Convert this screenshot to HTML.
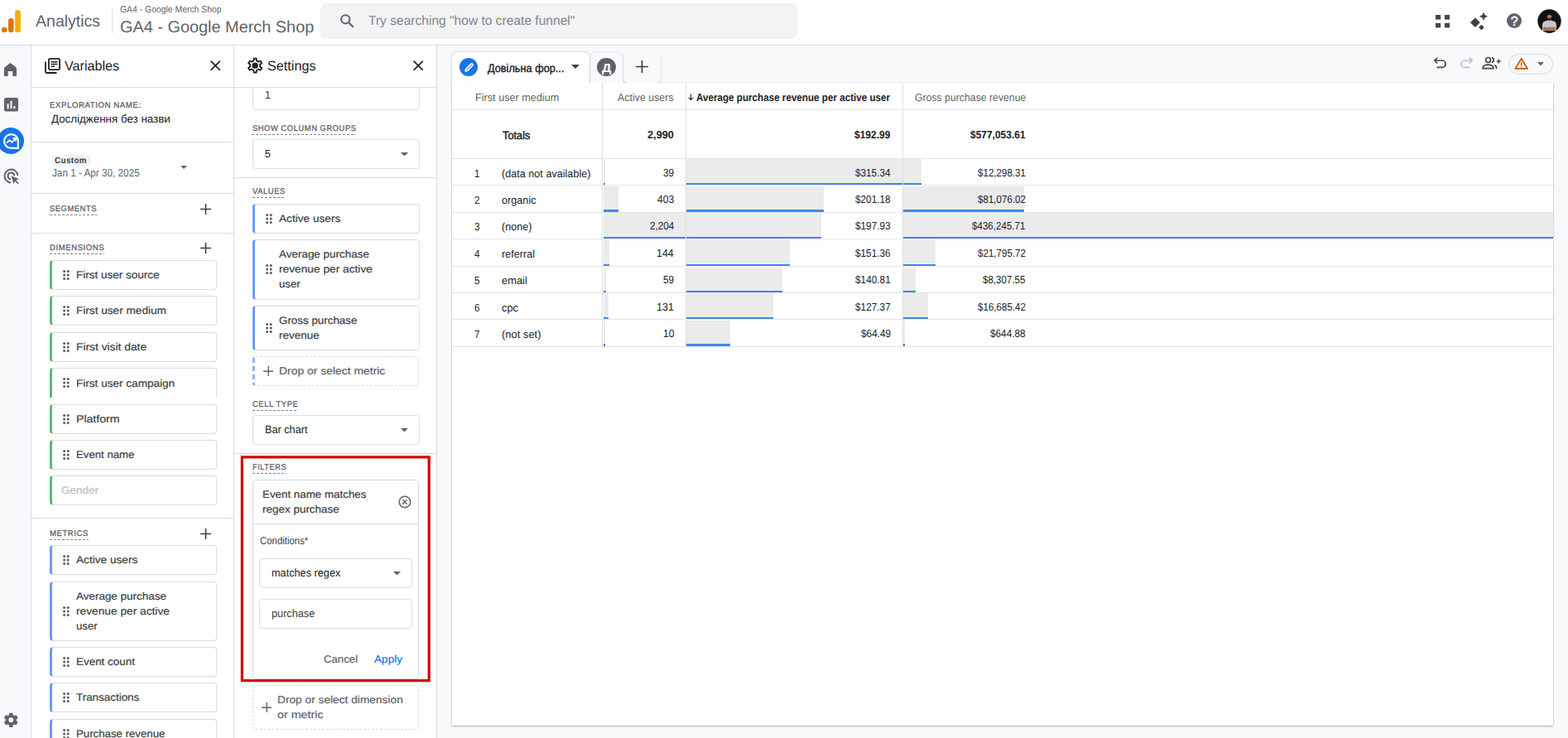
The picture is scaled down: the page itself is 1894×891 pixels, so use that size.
<!DOCTYPE html><html lang="en"><head><meta charset="utf-8"><title>Analytics</title><style>
*{box-sizing:border-box;margin:0;padding:0}
html,body{width:1894px;height:891px;overflow:hidden;background:#fff}
body{font-family:"Liberation Sans",sans-serif;color:#202124;position:relative;font-size:13px;text-rendering:geometricPrecision}
.a{position:absolute}
.t{position:absolute;white-space:nowrap;line-height:1}
.hl{position:absolute;height:1px;background:#dadce0}
.vl{position:absolute;width:1px;background:#dadce0}
.ul{position:absolute;height:1px;background:repeating-linear-gradient(90deg,#80868b 0,#80868b 3px,transparent 3px,transparent 5px)}
.chip{position:absolute;border:1px solid #dadce0;border-left-width:3px;border-radius:4px;background:#fff}
.dim{border-left-color:#5bb974}
.met{border-left-color:#669df6}
.box{position:absolute;border:1px solid #dadce0;border-radius:4px;background:#fff}
.bar{position:absolute;background:#ebebeb}
.bl{position:absolute;background:#4285f4}
.rb{position:absolute;height:1px;background:#e3e3e3;left:546px;width:1330px}
</style></head><body>
<div class="a" style="left:0px;top:55px;width:37px;height:836px;background:#f8f9fa;"></div>
<div class="a" style="left:528px;top:55px;width:1366px;height:836px;background:#f8f9fa;"></div>
<div class="hl" style="left:0px;top:54px;width:1894px"></div>
<div class="vl" style="left:37px;top:55px;height:836px"></div>
<div class="vl" style="left:282px;top:55px;height:836px"></div>
<div class="vl" style="left:527px;top:55px;height:836px"></div>
<svg class="a" style="left:2px;top:12px" width="24" height="28" viewBox="0 0 24 28"><rect x="16.2" y="0" width="6.7" height="27.3" rx="3.3" fill="#f9ab00"/><rect x="8" y="10" width="6.6" height="17.3" rx="3.3" fill="#e37400"/><circle cx="3.3" cy="24" r="3.3" fill="#e37400"/></svg>
<div class="t" style="left:43.3px;top:17px;font-size:19.7px;color:#5f6368;transform:scaleX(0.9916);transform-origin:0 0;">Analytics</div>
<div class="vl" style="left:135px;top:11px;height:29px"></div>
<div class="t" style="left:145px;top:7px;font-size:11.3px;color:#5f6368;transform:scaleX(0.9209);transform-origin:0 0;">GA4 - Google Merch Shop</div>
<div class="t" style="left:145.4px;top:24px;font-size:19.7px;color:#5f6368;transform:scaleX(1.0098);transform-origin:0 0;">GA4 - Google Merch Shop</div>
<div class="a" style="left:387px;top:4px;width:576px;height:43px;background:#f1f3f4;border-radius:8px"></div>
<svg class="a" style="left:410px;top:16px" width="19" height="19" viewBox="0 0 19 19"><circle cx="7.3" cy="7.3" r="5.1" stroke="#5f6368" stroke-width="2" fill="none"/><path d="M11.2 11.200L16.800 16.800" stroke="#5f6368" stroke-width="2.2" fill="none"/></svg>
<div class="t" style="left:445.3px;top:18px;font-size:15.8px;color:#80868b;transform:scaleX(0.9855);transform-origin:0 0;">Try searching &quot;how to create funnel&quot;</div>
<svg class="a" style="left:1734px;top:18px" width="17" height="16" viewBox="0 0 17 16"><g fill="#444746"><rect x="0" y="0" width="6.2" height="5.6"/><rect x="11" y="0" width="6" height="5.600"/><rect x="0" y="9.800" width="6.200" height="5.600"/><rect x="11" y="9.800" width="6" height="5.600"/></g></svg>
<svg class="a" style="left:1775px;top:15px" width="22" height="22" viewBox="0 0 22 22"><g fill="#3c4043"><path d="M6.900 6.300L12.800 12.200L6.900 18.100L1 12.200Z"/><path d="M17 0.700Q17.500 4.300 21.100 4.800Q17.500 5.300 17 8.900Q16.500 5.300 12.900 4.800Q16.500 4.300 17 0.700Z" stroke="#3c4043" stroke-width="1.100" stroke-linejoin="round"/><path d="M14.400 14.800L17.700 18.100L14.400 21.400L11.100 18.100Z"/></g></svg>
<div class="a" style="left:1820px;top:16px;width:18px;height:18px;border-radius:50%;background:#5f6368"></div>
<div class="t" style="left:1824.76px;top:19px;font-size:16px;color:#fff;-webkit-text-stroke:0.5px #fff;">?</div>
<svg class="a" style="left:1857px;top:11px" width="29" height="29" viewBox="0 0 29 29"><defs><clipPath id="av"><circle cx="14.5" cy="14.5" r="14.2"/></clipPath></defs><g clip-path="url(#av)"><rect width="29" height="29" fill="#121212"/><path d="M6 27.5V19.500Q6 14.800 10.500 14.200L12.800 13.600H16.200L18.500 14.200Q23 14.800 23 19.500V27.500Z" fill="#c6c7ca"/><ellipse cx="14.500" cy="9.300" rx="2.700" ry="3.500" fill="#a67a5f"/><path d="M11.700 8.300Q11.600 4.900 14.500 4.900T17.300 8.300Q16.500 6.900 14.500 6.900T11.700 8.300Z" fill="#1d1511"/><path d="M11.900 10.200Q14.500 11.800 17.100 10.200Q17 13.300 14.500 13.400T11.900 10.200Z" fill="#33241c"/><rect x="6.500" y="21.700" width="16" height="4.300" rx="2" fill="#a5775b"/><rect x="0" y="26.200" width="29" height="3" fill="#121212"/></g></svg>
<svg class="a" style="left:4.8px;top:75.5px" width="15" height="16.5" viewBox="0 0 15 16.5"><path d="M0 6.800Q0 5.800 0.800 5.200L6.500 0.600Q7.500 -0.100 8.500 0.600L14.200 5.200Q15 5.800 15 6.800V16.500H10.300V10H4.700V16.500H0Z" fill="#5f6368"/></svg>
<svg class="a" style="left:5px;top:118px" width="17" height="16.5" viewBox="0 0 17 16.5"><rect width="17" height="16.500" rx="2" fill="#5f6368"/><rect x="3.600" y="7.200" width="2" height="6" fill="#f8f9fa"/><rect x="7.500" y="3.800" width="2" height="9.400" fill="#f8f9fa"/><rect x="11.400" y="10" width="2" height="3.200" fill="#f8f9fa"/></svg>
<div class="a" style="left:-3px;top:154px;width:32px;height:32px;border-radius:50%;background:#1a73e8"></div>
<svg class="a" style="left:3.2px;top:159.5px" width="21" height="21" viewBox="0 0 20 20"><path d="M10 2a8 8 0 1 0 0 16h8V10A8 8 0 0 0 10 2Z" fill="none" stroke="#fff" stroke-width="2.100"/><path d="M4.800 11.800L8 8.800L10.800 11.200L14.500 7.500" stroke="#fff" stroke-width="1.900" fill="none"/><path d="M11.800 6.500h3.500V10" stroke="#fff" stroke-width="1.700" fill="none"/></svg>
<svg class="a" style="left:4px;top:203px" width="20" height="20" viewBox="0 0 20 20"><path d="M9 17.500A8 8 0 1 1 17.500 9" stroke="#5f6368" stroke-width="2" fill="none"/><path d="M9 13.500A4 4 0 1 1 13.500 9" stroke="#5f6368" stroke-width="2" fill="none"/><path d="M9.500 9.500L19 13L15.300 14.600L18.800 18.200L17.600 19.400L14.200 15.800L12.600 19Z" fill="#5f6368"/></svg>
<svg class="a" style="left:3.2px;top:858.7px" width="20.6" height="20.6" viewBox="0 0 24 24"><path fill="#5f6368" fill-rule="evenodd" d="M19.430 12.980c.040-.320.070-.640.070-.980s-.030-.660-.070-.980l2.110-1.650c.190-.150.240-.420.120-.640l-2-3.460c-.120-.220-.390-.300-.610-.220l-2.490 1c-.520-.400-1.080-.730-1.690-.980l-.380-2.650C14.460 2.180 14.250 2 14 2h-4c-.250 0-.460.180-.490.420l-.380 2.650c-.610.250-1.170.590-1.690.980l-2.490-1c-.230-.090-.490 0-.610.220l-2 3.460c-.130.220-.070.490.120.640l2.110 1.650c-.040.320-.070.650-.070.980s.030.660.070.980l-2.110 1.650c-.190.150-.240.420-.120.640l2 3.460c.120.220.390.300.610.220l2.490-1c.520.400 1.080.730 1.690.980l.380 2.650c.030.240.240.420.490.420h4c.250 0 .460-.180.490-.420l.380-2.650c.610-.250 1.170-.590 1.690-.980l2.490 1c.230.090.490 0 .610-.220l2-3.460c.120-.220.070-.490-.120-.640l-2.110-1.650zM12 15.500a3.500 3.500 0 1 1 0-7a3.500 3.500 0 0 1 0 7z"/></svg>
<svg class="a" style="left:54px;top:70px" width="19" height="19" viewBox="0 0 19 19"><path d="M1 4.500V16.500a1.500 1.500 0 0 0 1.500 1.500H14.500" stroke="#202124" stroke-width="1.800" fill="none"/><rect x="4.900" y="0.900" width="13.200" height="13.200" rx="1.500" stroke="#202124" stroke-width="1.800" fill="none"/><path d="M7.500 4.700H15.500M7.500 7.500H15.500M7.500 10.300H12" stroke="#202124" stroke-width="1.500" fill="none"/></svg>
<div class="t" style="left:78px;top:72px;font-size:16.5px;color:#202124;transform:scaleX(0.9778);transform-origin:0 0;">Variables</div>
<svg class="a" style="left:254.35px;top:72.95px" width="12.5" height="12.5" viewBox="0 0 12.5 12.5"><path d="M0.6 0.6L11.9 11.9M11.9 0.6L0.6 11.9" stroke="#202124" stroke-width="1.7" fill="none"/></svg>
<div class="hl" style="left:38px;top:105px;width:244px"></div>
<div class="t" style="left:60.3px;top:123px;font-size:9.7px;color:#5f6368;letter-spacing:0.6px;transform:scaleX(0.9891);transform-origin:0 0;-webkit-text-stroke:0.3px #5f6368;">EXPLORATION NAME:</div>
<div class="t" style="left:62.2px;top:137px;font-size:13.5px;color:#202124;transform:scaleX(0.9893);transform-origin:0 0;">Дослідження без назви</div>
<div class="hl" style="left:38px;top:171px;width:244px"></div>
<div class="a" style="left:63px;top:187px;width:46px;height:14px;background:#f1f3f4;"></div>
<div class="t" style="left:66.3px;top:189px;font-size:10.5px;color:#3c4043;font-weight:bold;letter-spacing:0.5px;transform:scaleX(0.9260);transform-origin:0 0;">Custom</div>
<div class="t" style="left:63.3px;top:202px;font-size:13px;color:#5f6368;transform:scaleX(0.9027);transform-origin:0 0;">Jan 1 - Apr 30, 2025</div>
<svg class="a" style="left:218px;top:200px" width="8" height="4" viewBox="0 0 8 4"><path d="M0 0H8L4.0 4Z" fill="#5f6368"/></svg>
<div class="hl" style="left:38px;top:233px;width:244px"></div>
<div class="t" style="left:60.2px;top:248px;font-size:9.7px;color:#5f6368;letter-spacing:0.6px;transform:scaleX(0.9638);transform-origin:0 0;-webkit-text-stroke:0.3px #5f6368;">SEGMENTS</div>
<div class="ul" style="left:59.7px;top:259px;width:57.1px"></div>
<svg class="a" style="left:241.5px;top:245.7px" width="13" height="13" viewBox="0 0 13 13"><path d="M6.5 0V13M0 6.5H13" stroke="#3c4043" stroke-width="1.6" fill="none"/></svg>
<div class="hl" style="left:38px;top:281px;width:244px"></div>
<div class="t" style="left:60.2px;top:295px;font-size:9.7px;color:#5f6368;letter-spacing:0.6px;transform:scaleX(0.9832);transform-origin:0 0;-webkit-text-stroke:0.3px #5f6368;">DIMENSIONS</div>
<div class="ul" style="left:59.7px;top:306px;width:66.3px"></div>
<svg class="a" style="left:241.5px;top:293.2px" width="13" height="13" viewBox="0 0 13 13"><path d="M6.5 0V13M0 6.5H13" stroke="#3c4043" stroke-width="1.6" fill="none"/></svg>
<div class="chip dim" style="left:60px;top:314px;width:202px;height:36px"></div>
<svg class="a" style="left:75.6px;top:325.8px" width="8" height="13" viewBox="0 0 8 13"><g fill="#5f6368"><circle cx="1.6" cy="1.6" r="1.55"/><circle cx="1.6" cy="6.1" r="1.55"/><circle cx="1.6" cy="10.6" r="1.55"/><circle cx="6.199999999999999" cy="1.6" r="1.55"/><circle cx="6.199999999999999" cy="6.1" r="1.55"/><circle cx="6.199999999999999" cy="10.6" r="1.55"/></g></svg>
<div class="t" style="left:92.2px;top:326px;font-size:12.5px;color:#3c4043;transform:scaleX(1.0807);transform-origin:0 0;-webkit-text-stroke:0.2px #3c4043;">First user source</div>
<div class="chip dim" style="left:60px;top:357px;width:202px;height:36px"></div>
<svg class="a" style="left:75.6px;top:368.8px" width="8" height="13" viewBox="0 0 8 13"><g fill="#5f6368"><circle cx="1.6" cy="1.6" r="1.55"/><circle cx="1.6" cy="6.1" r="1.55"/><circle cx="1.6" cy="10.6" r="1.55"/><circle cx="6.199999999999999" cy="1.6" r="1.55"/><circle cx="6.199999999999999" cy="6.1" r="1.55"/><circle cx="6.199999999999999" cy="10.6" r="1.55"/></g></svg>
<div class="t" style="left:92.2px;top:369px;font-size:12.5px;color:#3c4043;transform:scaleX(1.0888);transform-origin:0 0;-webkit-text-stroke:0.2px #3c4043;">First user medium</div>
<div class="chip dim" style="left:60px;top:401px;width:202px;height:36px"></div>
<svg class="a" style="left:75.6px;top:412.8px" width="8" height="13" viewBox="0 0 8 13"><g fill="#5f6368"><circle cx="1.6" cy="1.6" r="1.55"/><circle cx="1.6" cy="6.1" r="1.55"/><circle cx="1.6" cy="10.6" r="1.55"/><circle cx="6.199999999999999" cy="1.6" r="1.55"/><circle cx="6.199999999999999" cy="6.1" r="1.55"/><circle cx="6.199999999999999" cy="10.6" r="1.55"/></g></svg>
<div class="t" style="left:92.2px;top:413px;font-size:12.5px;color:#3c4043;transform:scaleX(1.1037);transform-origin:0 0;-webkit-text-stroke:0.2px #3c4043;">First visit date</div>
<div class="chip dim" style="left:60px;top:444px;width:202px;height:36px;border-bottom:none;border-radius:4px 4px 0 0"></div>
<svg class="a" style="left:75.6px;top:455.8px" width="8" height="13" viewBox="0 0 8 13"><g fill="#5f6368"><circle cx="1.6" cy="1.6" r="1.55"/><circle cx="1.6" cy="6.1" r="1.55"/><circle cx="1.6" cy="10.6" r="1.55"/><circle cx="6.199999999999999" cy="1.6" r="1.55"/><circle cx="6.199999999999999" cy="6.1" r="1.55"/><circle cx="6.199999999999999" cy="10.6" r="1.55"/></g></svg>
<div class="t" style="left:92.2px;top:457px;font-size:12.5px;color:#3c4043;transform:scaleX(1.0856);transform-origin:0 0;-webkit-text-stroke:0.2px #3c4043;">First user campaign</div>
<div class="chip dim" style="left:60px;top:488px;width:202px;height:36px"></div>
<svg class="a" style="left:75.6px;top:499.8px" width="8" height="13" viewBox="0 0 8 13"><g fill="#5f6368"><circle cx="1.6" cy="1.6" r="1.55"/><circle cx="1.6" cy="6.1" r="1.55"/><circle cx="1.6" cy="10.6" r="1.55"/><circle cx="6.199999999999999" cy="1.6" r="1.55"/><circle cx="6.199999999999999" cy="6.1" r="1.55"/><circle cx="6.199999999999999" cy="10.6" r="1.55"/></g></svg>
<div class="t" style="left:92.2px;top:500px;font-size:12.5px;color:#3c4043;transform:scaleX(1.1265);transform-origin:0 0;-webkit-text-stroke:0.2px #3c4043;">Platform</div>
<div class="chip dim" style="left:60px;top:531px;width:202px;height:36px"></div>
<svg class="a" style="left:75.6px;top:542.8px" width="8" height="13" viewBox="0 0 8 13"><g fill="#5f6368"><circle cx="1.6" cy="1.6" r="1.55"/><circle cx="1.6" cy="6.1" r="1.55"/><circle cx="1.6" cy="10.6" r="1.55"/><circle cx="6.199999999999999" cy="1.6" r="1.55"/><circle cx="6.199999999999999" cy="6.1" r="1.55"/><circle cx="6.199999999999999" cy="10.6" r="1.55"/></g></svg>
<div class="t" style="left:92.2px;top:543px;font-size:12.5px;color:#3c4043;transform:scaleX(1.0551);transform-origin:0 0;-webkit-text-stroke:0.2px #3c4043;">Event name</div>
<div class="chip dim" style="left:60px;top:574px;width:202px;height:36px"></div>
<div class="t" style="left:74.2px;top:586px;font-size:12.5px;color:#bdc1c6;transform:scaleX(1.0795);transform-origin:0 0;-webkit-text-stroke:0.2px #bdc1c6;">Gender</div>
<div class="hl" style="left:38px;top:625px;width:244px"></div>
<div class="t" style="left:60.2px;top:640px;font-size:9.7px;color:#5f6368;letter-spacing:0.6px;transform:scaleX(0.9826);transform-origin:0 0;-webkit-text-stroke:0.3px #5f6368;">METRICS</div>
<div class="ul" style="left:59.7px;top:651px;width:47px"></div>
<svg class="a" style="left:241.5px;top:637.5px" width="13" height="13" viewBox="0 0 13 13"><path d="M6.5 0V13M0 6.5H13" stroke="#3c4043" stroke-width="1.6" fill="none"/></svg>
<div class="chip met" style="left:60px;top:658px;width:202px;height:36px"></div>
<svg class="a" style="left:75.6px;top:669.8px" width="8" height="13" viewBox="0 0 8 13"><g fill="#5f6368"><circle cx="1.6" cy="1.6" r="1.55"/><circle cx="1.6" cy="6.1" r="1.55"/><circle cx="1.6" cy="10.6" r="1.55"/><circle cx="6.199999999999999" cy="1.6" r="1.55"/><circle cx="6.199999999999999" cy="6.1" r="1.55"/><circle cx="6.199999999999999" cy="10.6" r="1.55"/></g></svg>
<div class="t" style="left:92.2px;top:670px;font-size:12.5px;color:#3c4043;transform:scaleX(1.0908);transform-origin:0 0;-webkit-text-stroke:0.2px #3c4043;">Active users</div>
<div class="chip met" style="left:60px;top:702px;width:202px;height:72px"></div>
<svg class="a" style="left:75.6px;top:731.8px" width="8" height="13" viewBox="0 0 8 13"><g fill="#5f6368"><circle cx="1.6" cy="1.6" r="1.55"/><circle cx="1.6" cy="6.1" r="1.55"/><circle cx="1.6" cy="10.6" r="1.55"/><circle cx="6.199999999999999" cy="1.6" r="1.55"/><circle cx="6.199999999999999" cy="6.1" r="1.55"/><circle cx="6.199999999999999" cy="10.6" r="1.55"/></g></svg>
<div class="t" style="left:92.2px;top:714px;font-size:12.5px;color:#3c4043;transform:scaleX(1.0756);transform-origin:0 0;-webkit-text-stroke:0.2px #3c4043;">Average purchase</div>
<div class="t" style="left:92.2px;top:732px;font-size:12.5px;color:#3c4043;transform:scaleX(1.0980);transform-origin:0 0;-webkit-text-stroke:0.2px #3c4043;">revenue per active</div>
<div class="t" style="left:92.2px;top:750px;font-size:12.5px;color:#3c4043;transform:scaleX(1.0570);transform-origin:0 0;-webkit-text-stroke:0.2px #3c4043;">user</div>
<div class="chip met" style="left:60px;top:781px;width:202px;height:36px"></div>
<svg class="a" style="left:75.6px;top:792.8px" width="8" height="13" viewBox="0 0 8 13"><g fill="#5f6368"><circle cx="1.6" cy="1.6" r="1.55"/><circle cx="1.6" cy="6.1" r="1.55"/><circle cx="1.6" cy="10.6" r="1.55"/><circle cx="6.199999999999999" cy="1.6" r="1.55"/><circle cx="6.199999999999999" cy="6.1" r="1.55"/><circle cx="6.199999999999999" cy="10.6" r="1.55"/></g></svg>
<div class="t" style="left:92.2px;top:793px;font-size:12.5px;color:#3c4043;transform:scaleX(1.0743);transform-origin:0 0;-webkit-text-stroke:0.2px #3c4043;">Event count</div>
<div class="chip met" style="left:60px;top:824px;width:202px;height:36px"></div>
<svg class="a" style="left:75.6px;top:835.8px" width="8" height="13" viewBox="0 0 8 13"><g fill="#5f6368"><circle cx="1.6" cy="1.6" r="1.55"/><circle cx="1.6" cy="6.1" r="1.55"/><circle cx="1.6" cy="10.6" r="1.55"/><circle cx="6.199999999999999" cy="1.6" r="1.55"/><circle cx="6.199999999999999" cy="6.1" r="1.55"/><circle cx="6.199999999999999" cy="10.6" r="1.55"/></g></svg>
<div class="t" style="left:92.2px;top:836px;font-size:12.5px;color:#3c4043;transform:scaleX(1.0728);transform-origin:0 0;-webkit-text-stroke:0.2px #3c4043;">Transactions</div>
<div class="chip met" style="left:60px;top:868px;width:202px;height:36px"></div>
<svg class="a" style="left:75.6px;top:879.8px" width="8" height="13" viewBox="0 0 8 13"><g fill="#5f6368"><circle cx="1.6" cy="1.6" r="1.55"/><circle cx="1.6" cy="6.1" r="1.55"/><circle cx="1.6" cy="10.6" r="1.55"/><circle cx="6.199999999999999" cy="1.6" r="1.55"/><circle cx="6.199999999999999" cy="6.1" r="1.55"/><circle cx="6.199999999999999" cy="10.6" r="1.55"/></g></svg>
<div class="t" style="left:92.2px;top:880px;font-size:12.5px;color:#3c4043;transform:scaleX(1.0584);transform-origin:0 0;-webkit-text-stroke:0.2px #3c4043;">Purchase revenue</div>
<svg class="a" style="left:297.1px;top:67.9px" width="22.3" height="22.3" viewBox="0 0 24 24"><path fill="#202124" fill-rule="evenodd" d="M19.430 12.980c.040-.320.070-.640.070-.980s-.030-.660-.070-.980l2.110-1.650c.190-.150.240-.420.120-.640l-2-3.460c-.120-.220-.390-.300-.610-.220l-2.490 1c-.520-.400-1.080-.730-1.690-.980l-.380-2.650C14.460 2.180 14.250 2 14 2h-4c-.250 0-.460.180-.490.420l-.380 2.650c-.610.250-1.170.590-1.690.980l-2.490-1c-.230-.090-.490 0-.610.220l-2 3.460c-.130.220-.070.490.120.640l2.110 1.650c-.040.320-.070.650-.070.980s.030.660.070.980l-2.110 1.650c-.190.150-.240.420-.120.640l2 3.460c.120.220.390.300.610.220l2.490-1c.520.400 1.080.730 1.690.980l.380 2.650c.030.240.240.420.490.420h4c.250 0 .460-.180.490-.420l.380-2.650c.610-.250 1.170-.590 1.690-.980l2.490 1c.230.090.490 0 .610-.220l2-3.460c.120-.220.070-.490-.120-.640l-2.110-1.650zM17.450 11.270c.040.310.050.520.050.730s-.020.430-.050.730l-.140 1.130.890.700 1.080.840-.7 1.210-1.270-.510-1.040-.420-.9.680c-.430.320-.840.560-1.250.730l-1.060.430-.160 1.130-.2 1.350h-1.400l-.190-1.350-.160-1.130-1.060-.430c-.430-.180-.830-.410-1.230-.710l-.910-.7-1.060.430-1.270.510-.7-1.210 1.080-.840.890-.7-.14-1.130c-.030-.310-.050-.540-.050-.740s.020-.430.050-.730l.140-1.130-.890-.7-1.080-.840.7-1.210 1.270.51 1.040.42.900-.68c.430-.32.840-.56 1.250-.730l1.060-.43.160-1.130.2-1.350h1.390l.19 1.350.16 1.130 1.060.43c.430.180.830.410 1.230.71l.91.7 1.060-.43 1.270-.51.700 1.210-1.070.85-.89.700.14 1.130zM12 8a4 4 0 1 0 0 8a4 4 0 0 0 0-8z"/></svg>
<div class="t" style="left:323px;top:72px;font-size:16.5px;color:#202124;transform:scaleX(0.9826);transform-origin:0 0;">Settings</div>
<svg class="a" style="left:498.95px;top:72.95px" width="12.5" height="12.5" viewBox="0 0 12.5 12.5"><path d="M0.6 0.6L11.9 11.9M11.9 0.6L0.6 11.9" stroke="#202124" stroke-width="1.7" fill="none"/></svg>
<div class="box" style="left:305px;top:96px;width:202px;height:37px"></div>
<div class="a" style="left:283px;top:90px;width:244px;height:15px;background:#fff;"></div>
<div class="hl" style="left:283px;top:105px;width:244px"></div>
<div class="t" style="left:319.67px;top:108px;font-size:13px;color:#3c4043;">1</div>
<div class="t" style="left:304.8px;top:151px;font-size:9.7px;color:#5f6368;letter-spacing:0.6px;transform:scaleX(0.9636);transform-origin:0 0;-webkit-text-stroke:0.3px #5f6368;">SHOW COLUMN GROUPS</div>
<div class="ul" style="left:304.3px;top:162px;width:125.7px"></div>
<div class="box" style="left:305px;top:168px;width:202px;height:36px"></div>
<div class="t" style="left:319.71px;top:179px;font-size:13px;color:#202124;">5</div>
<svg class="a" style="left:483.5px;top:183.95px" width="9" height="4.5" viewBox="0 0 9 4.5"><path d="M0 0H9L4.5 4.5Z" fill="#5f6368"/></svg>
<div class="hl" style="left:283px;top:214px;width:244px"></div>
<div class="t" style="left:305px;top:227px;font-size:9.7px;color:#5f6368;letter-spacing:0.6px;transform:scaleX(0.9719);transform-origin:0 0;-webkit-text-stroke:0.3px #5f6368;">VALUES</div>
<div class="ul" style="left:304.5px;top:238px;width:40px"></div>
<div class="chip met" style="left:305px;top:246px;width:202px;height:36px"></div>
<svg class="a" style="left:320.6px;top:257.8px" width="8" height="13" viewBox="0 0 8 13"><g fill="#5f6368"><circle cx="1.6" cy="1.6" r="1.55"/><circle cx="1.6" cy="6.1" r="1.55"/><circle cx="1.6" cy="10.6" r="1.55"/><circle cx="6.199999999999999" cy="1.6" r="1.55"/><circle cx="6.199999999999999" cy="6.1" r="1.55"/><circle cx="6.199999999999999" cy="10.6" r="1.55"/></g></svg>
<div class="t" style="left:336.7px;top:258px;font-size:12.5px;color:#3c4043;transform:scaleX(1.0908);transform-origin:0 0;-webkit-text-stroke:0.2px #3c4043;">Active users</div>
<div class="chip met" style="left:305px;top:289px;width:202px;height:73px"></div>
<svg class="a" style="left:320.6px;top:319.3px" width="8" height="13" viewBox="0 0 8 13"><g fill="#5f6368"><circle cx="1.6" cy="1.6" r="1.55"/><circle cx="1.6" cy="6.1" r="1.55"/><circle cx="1.6" cy="10.6" r="1.55"/><circle cx="6.199999999999999" cy="1.6" r="1.55"/><circle cx="6.199999999999999" cy="6.1" r="1.55"/><circle cx="6.199999999999999" cy="10.6" r="1.55"/></g></svg>
<div class="t" style="left:336.7px;top:301px;font-size:12.5px;color:#3c4043;transform:scaleX(1.0756);transform-origin:0 0;-webkit-text-stroke:0.2px #3c4043;">Average purchase</div>
<div class="t" style="left:336.7px;top:319px;font-size:12.5px;color:#3c4043;transform:scaleX(1.0980);transform-origin:0 0;-webkit-text-stroke:0.2px #3c4043;">revenue per active</div>
<div class="t" style="left:336.7px;top:337px;font-size:12.5px;color:#3c4043;transform:scaleX(1.0570);transform-origin:0 0;-webkit-text-stroke:0.2px #3c4043;">user</div>
<div class="chip met" style="left:305px;top:369px;width:202px;height:54px"></div>
<svg class="a" style="left:320.6px;top:389.8px" width="8" height="13" viewBox="0 0 8 13"><g fill="#5f6368"><circle cx="1.6" cy="1.6" r="1.55"/><circle cx="1.6" cy="6.1" r="1.55"/><circle cx="1.6" cy="10.6" r="1.55"/><circle cx="6.199999999999999" cy="1.6" r="1.55"/><circle cx="6.199999999999999" cy="6.1" r="1.55"/><circle cx="6.199999999999999" cy="10.6" r="1.55"/></g></svg>
<div class="t" style="left:336.7px;top:381px;font-size:12.5px;color:#3c4043;transform:scaleX(1.0697);transform-origin:0 0;-webkit-text-stroke:0.2px #3c4043;">Gross purchase</div>
<div class="t" style="left:336.7px;top:399px;font-size:12.5px;color:#3c4043;transform:scaleX(1.0824);transform-origin:0 0;-webkit-text-stroke:0.2px #3c4043;">revenue</div>
<div class="a" style="left:305px;top:430px;width:201px;height:36px;border:1px dashed #dadce0;border-radius:4px"></div>
<div class="a" style="left:305px;top:432px;width:3px;height:33px;background:repeating-linear-gradient(180deg,#8ab4f8 0,#8ab4f8 6px,#fff 6px,#fff 10px)"></div>
<svg class="a" style="left:317.75px;top:441.75px" width="12.5" height="12.5" viewBox="0 0 12.5 12.5"><path d="M6.25 0V12.5M0 6.25H12.5" stroke="#5f6368" stroke-width="1.4" fill="none"/></svg>
<div class="t" style="left:337px;top:442px;font-size:12.6px;color:#5f6368;transform:scaleX(1.1045);transform-origin:0 0;-webkit-text-stroke:0.2px #5f6368;">Drop or select metric</div>
<div class="t" style="left:305px;top:484px;font-size:9.7px;color:#5f6368;letter-spacing:0.6px;transform:scaleX(0.9704);transform-origin:0 0;-webkit-text-stroke:0.3px #5f6368;">CELL TYPE</div>
<div class="ul" style="left:304.5px;top:495px;width:55.5px"></div>
<div class="box" style="left:305px;top:501px;width:202px;height:36px"></div>
<div class="t" style="left:319.8px;top:512px;font-size:13.3px;color:#202124;transform:scaleX(0.9542);transform-origin:0 0;">Bar chart</div>
<svg class="a" style="left:483.7px;top:517.15px" width="9" height="4.5" viewBox="0 0 9 4.5"><path d="M0 0H9L4.5 4.5Z" fill="#5f6368"/></svg>
<div class="hl" style="left:283px;top:547px;width:244px"></div>
<div class="t" style="left:305px;top:560px;font-size:9.7px;color:#5f6368;letter-spacing:0.6px;transform:scaleX(0.9497);transform-origin:0 0;-webkit-text-stroke:0.3px #5f6368;">FILTERS</div>
<div class="ul" style="left:304.5px;top:571px;width:41.2px"></div>
<div class="box" style="left:305px;top:579px;width:201px;height:241px"></div>
<div class="t" style="left:317px;top:591px;font-size:12.5px;color:#3c4043;transform:scaleX(1.0684);transform-origin:0 0;-webkit-text-stroke:0.2px #3c4043;">Event name matches</div>
<div class="t" style="left:317px;top:609px;font-size:12.5px;color:#3c4043;transform:scaleX(1.0768);transform-origin:0 0;-webkit-text-stroke:0.2px #3c4043;">regex purchase</div>
<svg class="a" style="left:481.3px;top:598.1px" width="16" height="16" viewBox="0 0 16 16"><circle cx="8" cy="8" r="6.800" stroke="#5f6368" stroke-width="1.500" fill="none"/><path d="M5.300 5.300L10.700 10.700M10.700 5.300L5.300 10.700" stroke="#5f6368" stroke-width="1.500"/></svg>
<div class="hl" style="left:306px;top:632px;width:199px"></div>
<div class="t" style="left:313.5px;top:647px;font-size:12.6px;color:#3c4043;transform:scaleX(0.9046);transform-origin:0 0;">Conditions*</div>
<div class="box" style="left:313px;top:674px;width:185px;height:36px"></div>
<div class="t" style="left:327.8px;top:685px;font-size:13.3px;color:#202124;transform:scaleX(0.9554);transform-origin:0 0;">matches regex</div>
<svg class="a" style="left:474.5px;top:689.85px" width="9" height="4.5" viewBox="0 0 9 4.5"><path d="M0 0H9L4.5 4.5Z" fill="#5f6368"/></svg>
<div class="box" style="left:313px;top:723px;width:185px;height:36px"></div>
<div class="t" style="left:327.8px;top:734px;font-size:13.3px;color:#3c4043;transform:scaleX(0.9551);transform-origin:0 0;">purchase</div>
<div class="t" style="left:391px;top:790px;font-size:12.6px;color:#5f6368;transform:scaleX(1.0478);transform-origin:0 0;-webkit-text-stroke:0.2px #5f6368;">Cancel</div>
<div class="t" style="left:452.3px;top:790px;font-size:12.6px;color:#1a73e8;transform:scaleX(1.0794);transform-origin:0 0;-webkit-text-stroke:0.2px #1a73e8;">Apply</div>
<svg class="a" style="left:288px;top:548px" width="235" height="278" viewBox="0 0 235 278"><rect x="4.350" y="3.900" width="225.900" height="269.800" fill="none" stroke="#d50000" stroke-width="3.200"/></svg>
<div class="a" style="left:305px;top:827px;width:201px;height:54px;border:1px dashed #dadce0;border-radius:4px"></div>
<svg class="a" style="left:315.85px;top:847.75px" width="12.5" height="12.5" viewBox="0 0 12.5 12.5"><path d="M6.25 0V12.5M0 6.25H12.5" stroke="#5f6368" stroke-width="1.4" fill="none"/></svg>
<div class="t" style="left:334.5px;top:839px;font-size:12.6px;color:#5f6368;transform:scaleX(1.0897);transform-origin:0 0;-webkit-text-stroke:0.2px #5f6368;">Drop or select dimension</div>
<div class="t" style="left:334.5px;top:857px;font-size:12.6px;color:#5f6368;transform:scaleX(1.1363);transform-origin:0 0;-webkit-text-stroke:0.2px #5f6368;">or metric</div>
<div class="a" style="left:546px;top:100px;width:1330px;height:776px;background:#fff;box-shadow:0 1px 2px rgba(60,64,67,.42),0 0 1.5px rgba(60,64,67,.16)"></div>
<div class="a" style="left:713px;top:63px;width:39px;height:37px;background:#f8f9fa;border-radius:7px 7px 0 0;box-shadow:0 0 2px rgba(60,64,67,.22)"></div>
<div class="a" style="left:753px;top:63px;width:45px;height:37px;background:#f8f9fa;border-radius:7px 7px 5px 5px;box-shadow:0 1px 2px rgba(60,64,67,.28)"></div>
<div class="a" style="left:546px;top:63px;width:166px;height:38px;background:#fff;border-radius:7px 7px 0 0;box-shadow:0 0 3px rgba(60,64,67,.3)"></div>
<div class="a" style="left:546px;top:100px;width:1330px;height:3px;background:#fff;"></div>
<div class="a" style="left:554.500px;top:69.700px;width:22.500px;height:22.500px;border-radius:50%;background:#1a73e8"></div>
<svg class="a" style="left:559.5px;top:74.7px" width="13" height="13" viewBox="0 0 13 13"><path d="M2 11L2.300 8.600L8.900 2a1.200 1.200 0 0 1 1.700 0l.4.400a1.200 1.200 0 0 1 0 1.700L4.400 10.700Z" fill="#8ab4f8" stroke="#fff" stroke-width="1.300" stroke-linejoin="round"/></svg>
<div class="t" style="left:588.7px;top:76px;font-size:13.8px;color:#202124;transform:scaleX(0.9230);transform-origin:0 0;-webkit-text-stroke:0.4px #202124;">Довільна фор...</div>
<svg class="a" style="left:689.5px;top:78.3px" width="10" height="5" viewBox="0 0 10 5"><path d="M0 0H10L5.0 5Z" fill="#3c4043"/></svg>
<div class="a" style="left:720.500px;top:69.700px;width:23px;height:22.500px;border-radius:50%;background:#5f6368"></div>
<div class="t" style="left:726.78px;top:76px;font-size:14.5px;color:#fff;font-weight:bold;transform:scaleX(1.1034);transform-origin:0 0;">Д</div>
<svg class="a" style="left:768px;top:73px" width="15" height="15" viewBox="0 0 15 15"><path d="M7.5 0V15M0 7.5H15" stroke="#3c4043" stroke-width="1.7" fill="none"/></svg>
<svg class="a" style="left:1731px;top:68px" width="17" height="16" viewBox="0 0 17 16"><path d="M5.300 1.500L1.800 5L5.300 8.500" stroke="#444746" stroke-width="1.700" fill="none"/><path d="M2.200 5H11a4.200 4.200 0 0 1 0 8.400H4.500" stroke="#444746" stroke-width="1.700" fill="none"/></svg>
<svg class="a" style="left:1763px;top:68px" width="17" height="16" viewBox="0 0 17 16"><path d="M11.700 1.500L15.200 5L11.700 8.500" stroke="#bdc1c6" stroke-width="1.700" fill="none"/><path d="M14.800 5H6a4.200 4.200 0 0 0 0 8.400H12.500" stroke="#bdc1c6" stroke-width="1.700" fill="none"/></svg>
<svg class="a" style="left:1790px;top:68px" width="24" height="16" viewBox="0 0 24 16"><circle cx="7.500" cy="4.500" r="3" stroke="#444746" stroke-width="1.700" fill="none"/><path d="M1.200 14.700v-1.200c0-2 3.200-3.300 6.300-3.300s6.300 1.300 6.300 3.300v1.200Z" stroke="#444746" stroke-width="1.700" fill="none"/><path d="M12 1.600a3 3 0 0 1 0 5.800M15.300 10.600c1.400.6 2.200 1.600 2.200 2.900V15" stroke="#444746" stroke-width="1.700" fill="none"/><path d="M20.300 3.500v5M17.800 6h5" stroke="#444746" stroke-width="1.500" fill="none"/></svg>
<div class="a" style="left:1822px;top:65px;width:54px;height:25px;border:1px solid #dadce0;border-radius:13px"></div>
<svg class="a" style="left:1828.5px;top:68.7px" width="17.5" height="15" viewBox="0 0 17.5 15"><path d="M8.700 1.700L16 13.900H1.400Z" stroke="#c5520a" stroke-width="1.700" fill="none" stroke-linejoin="round"/><path d="M8.700 6v4.200M8.700 11.200v1.400" stroke="#c5520a" stroke-width="1.500"/></svg>
<svg class="a" style="left:1857px;top:74.95px" width="8" height="4.5" viewBox="0 0 8 4.5"><path d="M0 0H8L4.0 4.5Z" fill="#5f6368"/></svg>
<div class="t" style="left:573.5px;top:111px;font-size:13px;color:#5f6368;transform:scaleX(0.9743);transform-origin:0 0;">First user medium</div>
<div class="t" style="left:746.3px;top:111px;font-size:13px;color:#5f6368;transform:scaleX(0.9551);transform-origin:0 0;">Active users</div>
<div class="t" style="left:841.3px;top:111px;font-size:13px;color:#202124;font-weight:bold;transform:scaleX(0.8965);transform-origin:0 0;">Average purchase revenue per active user</div>
<svg class="a" style="left:831px;top:112.5px" width="7" height="8.5" viewBox="0 0 7 8.5"><path d="M3.500 0.500V7.500M0.800 4.800L3.500 7.500L6.200 4.800" stroke="#202124" stroke-width="1.100" fill="none"/></svg>
<div class="t" style="left:1104.7px;top:111px;font-size:13px;color:#5f6368;transform:scaleX(0.9436);transform-origin:0 0;">Gross purchase revenue</div>
<div class="rb" style="top:132px"></div>
<div class="t" style="left:606.6px;top:157px;font-size:13.5px;color:#202124;transform:scaleX(0.9455);transform-origin:0 0;-webkit-text-stroke:0.45px #202124;">Totals</div>
<div class="t" style="left:782.3px;top:156px;font-size:13px;color:#202124;font-weight:bold;transform:scaleX(0.9809);transform-origin:0 0;">2,990</div>
<div class="t" style="left:1032.3px;top:156px;font-size:13px;color:#202124;font-weight:bold;transform:scaleX(0.9224);transform-origin:0 0;">$192.99</div>
<div class="t" style="left:1172.3px;top:156px;font-size:13px;color:#202124;font-weight:bold;transform:scaleX(0.9204);transform-origin:0 0;">$577,053.61</div>
<div class="rb" style="top:191px"></div>
<div class="a" style="left:729px;top:192px;width:1.5px;height:29px;background:#ebebeb;"></div>
<div class="a" style="left:729px;top:221px;width:1.5px;height:2px;background:#4285f4;"></div>
<div class="a" style="left:829px;top:192px;width:261px;height:29px;background:#ebebeb;"></div>
<div class="a" style="left:829px;top:221px;width:261px;height:2px;background:#4285f4;"></div>
<div class="a" style="left:1091px;top:192px;width:22px;height:29px;background:#ebebeb;"></div>
<div class="a" style="left:1091px;top:221px;width:22px;height:2px;background:#4285f4;"></div>
<div class="rb" style="top:223px"></div>
<div class="t" style="left:573.42px;top:203px;font-size:13px;color:#202124;transform:scaleX(0.9000);transform-origin:0 0;">1</div>
<div class="t" style="left:606.3px;top:203px;font-size:13px;color:#202124;transform:scaleX(0.9719);transform-origin:0 0;">(data not available)</div>
<div class="t" style="left:801.25px;top:202px;font-size:13px;color:#202124;transform:scaleX(0.9133);transform-origin:0 0;">39</div>
<div class="t" style="left:1033.18px;top:202px;font-size:13px;color:#202124;transform:scaleX(0.9037);transform-origin:0 0;">$315.34</div>
<div class="t" style="left:1180.98px;top:202px;font-size:13px;color:#202124;transform:scaleX(0.8909);transform-origin:0 0;">$12,298.31</div>
<div class="a" style="left:729px;top:225px;width:18px;height:28px;background:#ebebeb;"></div>
<div class="a" style="left:729px;top:253px;width:18px;height:2.5px;background:#4285f4;"></div>
<div class="a" style="left:829px;top:225px;width:165.5px;height:28px;background:#ebebeb;"></div>
<div class="a" style="left:829px;top:253px;width:165.5px;height:2.5px;background:#4285f4;"></div>
<div class="a" style="left:1091px;top:225px;width:145.5px;height:28px;background:#ebebeb;"></div>
<div class="a" style="left:1091px;top:253px;width:145.5px;height:2.5px;background:#4285f4;"></div>
<div class="rb" style="top:256px"></div>
<div class="t" style="left:573.12px;top:235px;font-size:13px;color:#202124;transform:scaleX(0.9000);transform-origin:0 0;">2</div>
<div class="t" style="left:606.3px;top:235px;font-size:13px;color:#202124;transform:scaleX(0.9744);transform-origin:0 0;">organic</div>
<div class="t" style="left:794.13px;top:234px;font-size:13px;color:#202124;transform:scaleX(0.9360);transform-origin:0 0;">403</div>
<div class="t" style="left:1033.18px;top:234px;font-size:13px;color:#202124;transform:scaleX(0.9075);transform-origin:0 0;">$201.18</div>
<div class="t" style="left:1180.98px;top:234px;font-size:13px;color:#202124;transform:scaleX(0.8913);transform-origin:0 0;">$81,076.02</div>
<div class="a" style="left:729px;top:257px;width:99px;height:28.5px;background:#ebebeb;"></div>
<div class="a" style="left:729px;top:285.5px;width:99px;height:2.5px;background:#4285f4;"></div>
<div class="a" style="left:829px;top:257px;width:163px;height:28.5px;background:#ebebeb;"></div>
<div class="a" style="left:829px;top:285.5px;width:163px;height:2.5px;background:#4285f4;"></div>
<div class="a" style="left:1091px;top:257px;width:785px;height:28.5px;background:#ebebeb;"></div>
<div class="a" style="left:1091px;top:285.5px;width:785px;height:2.5px;background:#4285f4;"></div>
<div class="rb" style="top:288px"></div>
<div class="t" style="left:573.26px;top:267px;font-size:13px;color:#202124;transform:scaleX(0.9000);transform-origin:0 0;">3</div>
<div class="t" style="left:606.3px;top:267px;font-size:13px;color:#202124;transform:scaleX(0.9704);transform-origin:0 0;">(none)</div>
<div class="t" style="left:785.02px;top:266px;font-size:13px;color:#202124;transform:scaleX(0.8977);transform-origin:0 0;">2,204</div>
<div class="t" style="left:1033.18px;top:266px;font-size:13px;color:#202124;transform:scaleX(0.9075);transform-origin:0 0;">$197.93</div>
<div class="t" style="left:1174.48px;top:266px;font-size:13px;color:#202124;transform:scaleX(0.8919);transform-origin:0 0;">$436,245.71</div>
<div class="a" style="left:729px;top:290px;width:6.5px;height:28.5px;background:#ebebeb;"></div>
<div class="a" style="left:729px;top:318.5px;width:6.5px;height:2.5px;background:#4285f4;"></div>
<div class="a" style="left:829px;top:290px;width:124.5px;height:28.5px;background:#ebebeb;"></div>
<div class="a" style="left:829px;top:318.5px;width:124.5px;height:2.5px;background:#4285f4;"></div>
<div class="a" style="left:1091px;top:290px;width:39px;height:28.5px;background:#ebebeb;"></div>
<div class="a" style="left:1091px;top:318.5px;width:39px;height:2.5px;background:#4285f4;"></div>
<div class="rb" style="top:321px"></div>
<div class="t" style="left:573.44px;top:300px;font-size:13px;color:#202124;transform:scaleX(0.9000);transform-origin:0 0;">4</div>
<div class="t" style="left:606.3px;top:300px;font-size:13px;color:#202124;transform:scaleX(0.9727);transform-origin:0 0;">referral</div>
<div class="t" style="left:793.47px;top:299px;font-size:13px;color:#202124;transform:scaleX(0.9585);transform-origin:0 0;">144</div>
<div class="t" style="left:1033.18px;top:299px;font-size:13px;color:#202124;transform:scaleX(0.9075);transform-origin:0 0;">$151.36</div>
<div class="t" style="left:1180.98px;top:299px;font-size:13px;color:#202124;transform:scaleX(0.8913);transform-origin:0 0;">$21,795.72</div>
<div class="a" style="left:729px;top:322.5px;width:2.5px;height:28px;background:#ebebeb;"></div>
<div class="a" style="left:729px;top:350.5px;width:2.5px;height:2.5px;background:#4285f4;"></div>
<div class="a" style="left:829px;top:322.5px;width:116px;height:28px;background:#ebebeb;"></div>
<div class="a" style="left:829px;top:350.5px;width:116px;height:2.5px;background:#4285f4;"></div>
<div class="a" style="left:1091px;top:322.5px;width:15px;height:28px;background:#ebebeb;"></div>
<div class="a" style="left:1091px;top:350.5px;width:15px;height:2.5px;background:#4285f4;"></div>
<div class="rb" style="top:353px"></div>
<div class="t" style="left:573.23px;top:332px;font-size:13px;color:#202124;transform:scaleX(0.9000);transform-origin:0 0;">5</div>
<div class="t" style="left:606.3px;top:332px;font-size:13px;color:#202124;transform:scaleX(0.9903);transform-origin:0 0;">email</div>
<div class="t" style="left:801.22px;top:331px;font-size:13px;color:#202124;transform:scaleX(0.9156);transform-origin:0 0;">59</div>
<div class="t" style="left:1033.18px;top:331px;font-size:13px;color:#202124;transform:scaleX(0.9088);transform-origin:0 0;">$140.81</div>
<div class="t" style="left:1187.48px;top:331px;font-size:13px;color:#202124;transform:scaleX(0.8886);transform-origin:0 0;">$8,307.55</div>
<div class="a" style="left:729px;top:354px;width:6px;height:28.5px;background:#ebebeb;"></div>
<div class="a" style="left:729px;top:382.5px;width:6px;height:2.5px;background:#4285f4;"></div>
<div class="a" style="left:829px;top:354px;width:105px;height:28.5px;background:#ebebeb;"></div>
<div class="a" style="left:829px;top:382.5px;width:105px;height:2.5px;background:#4285f4;"></div>
<div class="a" style="left:1091px;top:354px;width:30px;height:28.5px;background:#ebebeb;"></div>
<div class="a" style="left:1091px;top:382.5px;width:30px;height:2.5px;background:#4285f4;"></div>
<div class="rb" style="top:385px"></div>
<div class="t" style="left:573.12px;top:365px;font-size:13px;color:#202124;transform:scaleX(0.9000);transform-origin:0 0;">6</div>
<div class="t" style="left:606.3px;top:365px;font-size:13px;color:#202124;transform:scaleX(0.9921);transform-origin:0 0;">cpc</div>
<div class="t" style="left:793.45px;top:364px;font-size:13px;color:#202124;transform:scaleX(0.9709);transform-origin:0 0;">131</div>
<div class="t" style="left:1033.18px;top:364px;font-size:13px;color:#202124;transform:scaleX(0.9094);transform-origin:0 0;">$127.37</div>
<div class="t" style="left:1180.98px;top:364px;font-size:13px;color:#202124;transform:scaleX(0.8913);transform-origin:0 0;">$16,685.42</div>
<div class="a" style="left:729px;top:387px;width:1.5px;height:28px;background:#ebebeb;"></div>
<div class="a" style="left:729px;top:415px;width:1.5px;height:2.5px;background:#4285f4;"></div>
<div class="a" style="left:829px;top:387px;width:53px;height:28px;background:#ebebeb;"></div>
<div class="a" style="left:829px;top:415px;width:53px;height:2.5px;background:#4285f4;"></div>
<div class="a" style="left:1091px;top:387px;width:1.5px;height:28px;background:#ebebeb;"></div>
<div class="a" style="left:1091px;top:415px;width:1.5px;height:2.5px;background:#4285f4;"></div>
<div class="rb" style="top:418px"></div>
<div class="t" style="left:573.12px;top:397px;font-size:13px;color:#202124;transform:scaleX(0.9000);transform-origin:0 0;">7</div>
<div class="t" style="left:606.3px;top:397px;font-size:13px;color:#202124;transform:scaleX(0.9958);transform-origin:0 0;">(not set)</div>
<div class="t" style="left:800.78px;top:396px;font-size:13px;color:#202124;transform:scaleX(0.9408);transform-origin:0 0;">10</div>
<div class="t" style="left:1039.68px;top:396px;font-size:13px;color:#202124;transform:scaleX(0.9095);transform-origin:0 0;">$64.49</div>
<div class="t" style="left:1196.28px;top:396px;font-size:13px;color:#202124;transform:scaleX(0.9075);transform-origin:0 0;">$644.88</div>
<div class="vl" style="left:727px;top:100px;height:319px;background:#e0e0e0"></div>
<div class="vl" style="left:828px;top:100px;height:319px;background:#e0e0e0"></div>
<div class="vl" style="left:1090px;top:100px;height:319px;background:#e0e0e0"></div>
</body></html>
